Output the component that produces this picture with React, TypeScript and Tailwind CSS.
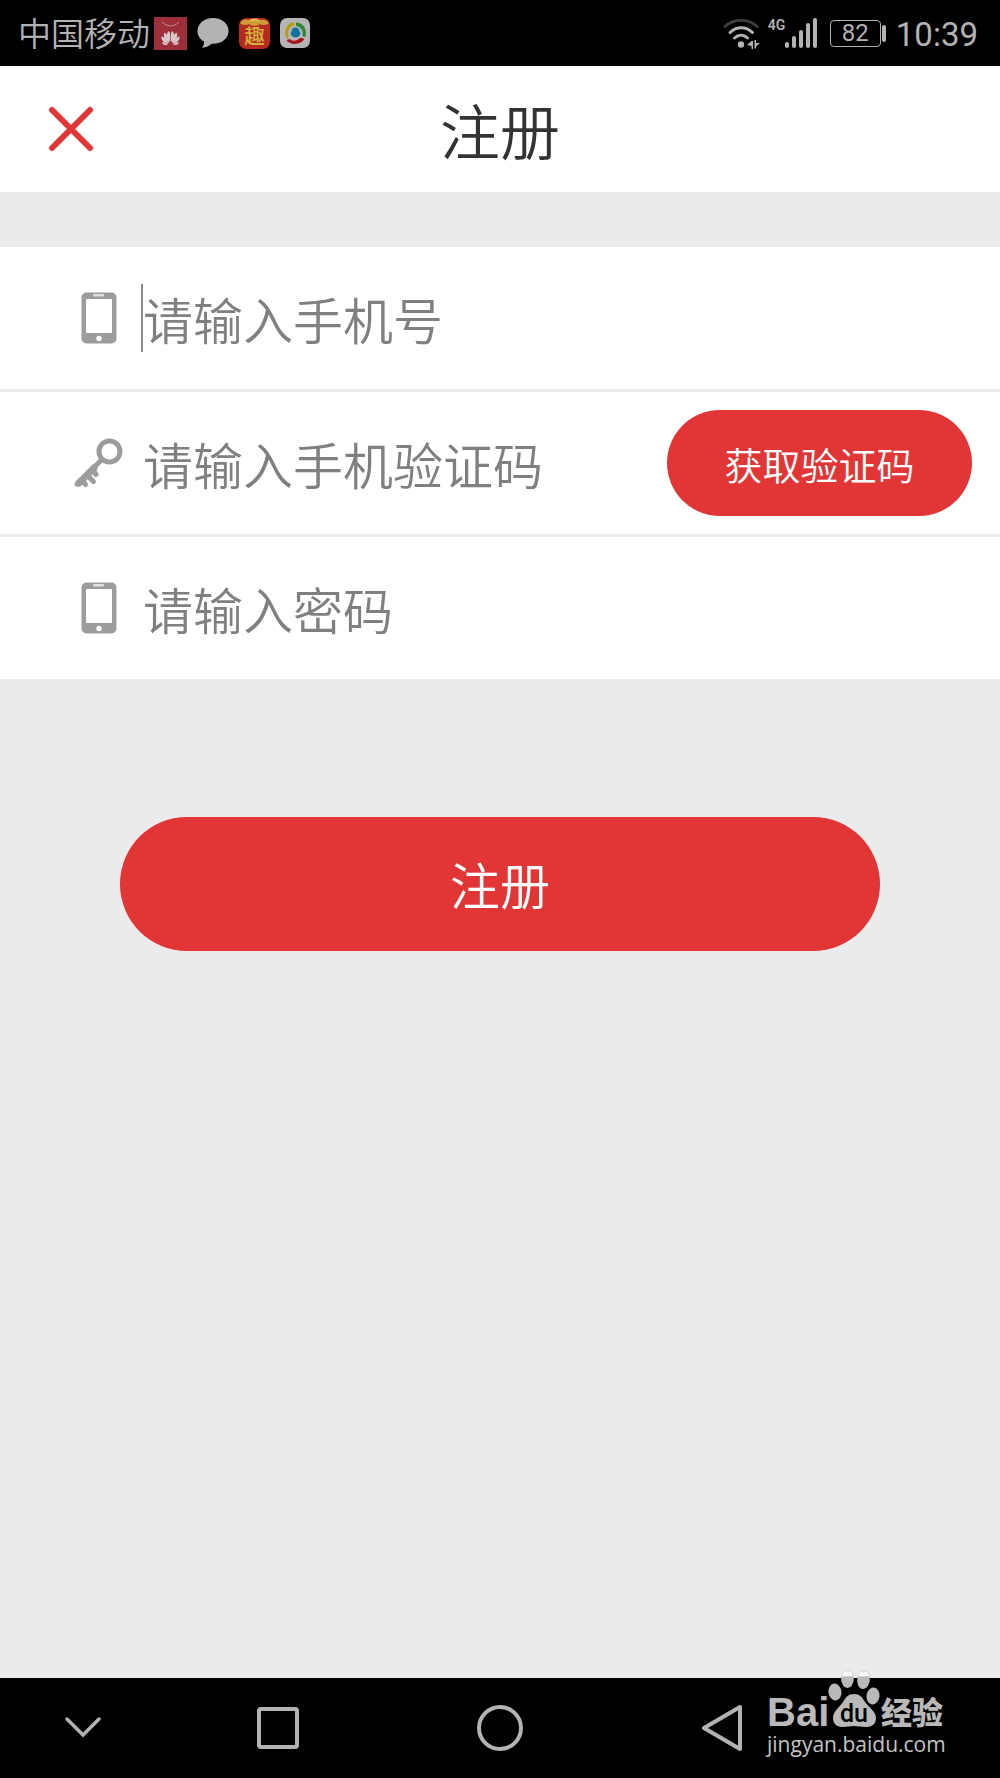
import type { ReactNode } from 'react';

const cjk = "font-['Roboto','Noto_Sans_CJK_SC',sans-serif]";

function HuaweiIcon() {
  const half = (
    <>
      <path d="M15.900 25C12 21 12 16 15 14C16.400 16 16.400 21 15.900 25Z" />
      <path d="M15.200 26C10 22.500 9 18.500 10.500 15.500C13 17 14.500 21 15.200 26Z" />
      <path d="M14.500 26.800C9 25.500 7 22.500 7.500 19.500C10.500 20 13 23 14.500 26.800Z" />
      <path d="M14 27.600C10.500 28.800 8.500 27.500 8.200 25C10 25 12.500 26 14 27.600Z" />
    </>
  );
  return (
    <svg viewBox="0 0 33 33" className="size-[33px]" aria-hidden="true">
      <rect width="33" height="33" fill="#9d2f3a" />
      <path d="M8 5C11 8 15 9 17 9C19 9 22 8 25 5" fill="none" stroke="#c78a90" strokeWidth="1" />
      <g fill="#dccaca">
        {half}
        <g transform="translate(33 0) scale(-1 1)">{half}</g>
      </g>
    </svg>
  );
}

function BubbleIcon() {
  return (
    <svg viewBox="0 0 32 30" className="h-[30px] w-8" aria-hidden="true">
      <path d="M16 0C7 0 0.500 5.800 0.500 13c0 4.500 2.500 8.200 6.500 10.600C7.300 26 6.500 28 5 30c4.500-.6 7.300-2 9.500-4.200C24.500 26.500 31.500 20.500 31.500 13 31.500 5.800 25 0 16 0Z" fill="#b3b3b3" />
    </svg>
  );
}

function QuIcon() {
  return (
    <svg viewBox="0 0 30 30" className="size-[31px] overflow-visible" aria-hidden="true">
      <rect width="30" height="30" rx="7" fill="#b62a20" />
      <path d="M1 5c2-4 6-4 9-3 2-2 8-2 10 0 4-1 7 0 9 3-2 2-6 2-9 1-3 2-7 2-10 0-3 1-7 1-9-1Z" fill="#cf9d33" />
      <path d="M11 3c2-2 6-2 8 0" stroke="#e2c16b" strokeWidth="1.500" fill="none" />
      <text x="15" y="25" fontSize="20" fontWeight="500" textAnchor="middle" fill="#d3b13a" fontFamily="Noto Sans CJK SC">趣</text>
    </svg>
  );
}

function RingIcon() {
  return (
    <svg viewBox="0 0 30 30" className="size-[30px]" aria-hidden="true">
      <rect width="30" height="30" rx="7" fill="#b5b5b5" />
      <path d="M14 4C7 5 3 12 6.500 20C7.500 21 9 20 8.800 18.500C7 13 9.500 8.500 14.500 7Z" fill="#b79b16" />
      <path d="M16 4.500C23 4.500 27.500 11 25.500 18.500C24 19.500 22.500 18.500 22.500 17C23.500 12.500 20.500 8.500 16 8Z" fill="#2b8a35" />
      <path d="M24.500 21C20.500 27 11 27.500 6.500 22.500C8.500 20.500 10.500 21.500 12 22.500C15.500 23.500 18.500 21.500 20.500 19.800Z" fill="#a3141c" />
      <path d="M15.500 9.500c2.700 0 4 1.800 4 4.200 1.300 1.500 1 3 .2 3.300-.7 1.600-2 2.300-4.200 2.300s-3.500-.7-4.200-2.300c-.8-.3-1.100-1.800.2-3.300 0-2.400 1.300-4.200 4-4.200Z" fill="#12719f" />
    </svg>
  );
}

function WifiIcon() {
  return (
    <svg viewBox="0 0 37 32" className="h-8 w-[37px]" aria-hidden="true">
      <g fill="none" strokeLinecap="round" strokeWidth="3">
        <path d="M2 9.500C11 1 25 1 34 9.500" stroke="#3c3c3c" />
        <path d="M7 15.500C13.500 9 23 9 29.500 15.500" stroke="#b3b3b3" />
        <path d="M11.500 21C15.500 17.300 20.500 17.300 24.500 21" stroke="#b3b3b3" />
      </g>
      <circle cx="18" cy="27.500" r="3.200" fill="#b3b3b3" />
      <path d="M24 28l4.500-4h1.500v8h-1.500v-3ZM31.500 23H33v3h4l-4 3.500v2h-1.500Z" fill="#b3b3b3" />
    </svg>
  );
}

function SignalIcon() {
  const tops = [25, 19, 13, 6, 1];
  return (
    <div className="relative h-8 w-[50px]">
      <span className="absolute top-0 left-0 font-['Roboto',sans-serif] text-sm leading-4 font-semibold">4G</span>
      <svg viewBox="0 0 50 32" className="h-8 w-[50px]" aria-hidden="true">
        {tops.map((t, i) => (
          <rect key={t} x={17 + i * 7} y={t} width="4" height={31 - t} rx="2" fill="#b3b3b3" />
        ))}
      </svg>
    </div>
  );
}

function Battery() {
  return (
    <div className="flex items-center gap-px">
      <div className="flex h-[27px] w-[51px] items-center justify-center rounded-[4px] border border-[#b3b3b3] text-2xl leading-6">82</div>
      <div className="h-[17px] w-1 rounded-[2px] bg-[#b3b3b3]" />
    </div>
  );
}

function PhoneIcon() {
  return (
    <svg viewBox="0 0 36 52" className="h-[52px] w-9" aria-hidden="true">
      <rect x="0.500" y="0.500" width="35" height="51" rx="5" fill="#9c9c9c" />
      <rect x="5" y="7" width="26" height="34" rx="1" fill="#fff" />
      <rect x="12" y="2" width="11" height="2.500" rx="1" fill="#e0e0e0" />
      <circle cx="18" cy="46.500" r="2.700" fill="#fff" />
    </svg>
  );
}

function KeyIcon() {
  return (
    <svg viewBox="0 0 50 50" className="size-[50px]" aria-hidden="true">
      <g fill="none" stroke="#9c9c9c" strokeLinecap="round">
        <circle cx="35.500" cy="13.500" r="10.500" strokeWidth="5" />
        <path d="M27 22.500L3 46" strokeWidth="5" />
        <path d="M20 30L5 45" strokeWidth="7" />
        <path d="M19 32l3 4.500M13.500 37.500l6 6M8.500 42.500l3 4" strokeWidth="5" />
      </g>
    </svg>
  );
}

interface FieldProps {
  id: string;
  label: string;
  type: string;
  icon: ReactNode;
  caret?: boolean;
  children?: ReactNode;
}

function Field({ id, label, type, icon, caret, children }: FieldProps) {
  return (
    <div className="flex h-[142px] items-center bg-white pr-7 pl-[73px]">
      <label htmlFor={id} aria-label={label} className="mr-4 flex w-[52px] shrink-0 justify-center">
        {icon}
      </label>
      <span className={caret ? 'h-[68px] w-[2px] shrink-0 bg-[#8a8a8a]' : 'h-[68px] w-[2px] shrink-0'} />
      <input
        id={id}
        type={type}
        placeholder={label}
        className="min-w-0 flex-1 bg-transparent pt-[10px] text-[50px] leading-[80px] font-[350] text-[#333] outline-none placeholder:text-[#808080]"
      />
      {children}
    </div>
  );
}

function Watermark() {
  return (
    <a href="#jingyan" className="absolute right-[53px] bottom-[22px] block w-[180px] text-[#c4c4c4]">
      <svg viewBox="0 0 180 60" className="h-[60px] w-full overflow-visible" aria-label="Baidu 经验">
        <g fill="#b9b9b9">
          <text x="0" y="54" fontSize="40" fontWeight="700" fontFamily="Liberation Sans">Bai</text>
          <text x="114" y="52" fontSize="31" fontWeight="900" fontFamily="Noto Sans CJK SC">经验</text>
          <ellipse cx="68" cy="20" rx="6.500" ry="8.500" transform="rotate(-8 68 20)" />
          <ellipse cx="80.500" cy="7" rx="6.300" ry="9" />
          <ellipse cx="96.500" cy="8" rx="6.300" ry="9" transform="rotate(8 96.500 8)" />
          <ellipse cx="106" cy="24" rx="6.500" ry="8.500" transform="rotate(8 106 24)" />
          <path d="M87 22c6 0 8 3 11 8 4 6 11 9 11 16 0 6-4 9-10 9-5 0-8-1-12-1s-7 1-12 1c-6 0-9-4-9-9 0-7 6-10 10-16 3-5 5-8 11-8Z" />
        </g>
        <path d="M74.500 4.500C76-3.500 85-3.500 86.500 4.500ZM90.500 4.500C92.500-3.500 102-2 103 4.500Z" fill="#f8f8f8" stroke="#d4d4d4" strokeWidth="1" />
        <text x="87" y="50" fontSize="25" fontWeight="500" textAnchor="middle" fill="#000" fontFamily="Roboto">du</text>
      </svg>
      <span className="block font-['Open_Sans',sans-serif] text-[21px] leading-6">jingyan.baidu.com</span>
    </a>
  );
}

export default function App() {
  return (
    <div className={`flex min-h-screen flex-col bg-[#ebebeb] ${cjk}`}>
      <div className="flex h-[66px] items-center justify-between bg-black pr-[22px] pl-[18px] text-[#b3b3b3]">
        <div className="flex items-center">
          <span className="mr-1 pt-1 text-[33px] leading-[48px] font-[350]">中国移动</span>
          <div className="flex items-center gap-[10px]">
            <HuaweiIcon />
            <BubbleIcon />
            <QuIcon />
            <RingIcon />
          </div>
        </div>
        <div className="flex items-center">
          <WifiIcon />
          <div className="ml-2">
            <SignalIcon />
          </div>
          <div className="ml-3">
            <Battery />
          </div>
          <span className="ml-[10px] pt-1 text-[33px] leading-[48px]">10:39</span>
        </div>
      </div>

      <header className="grid h-[126px] grid-cols-[1fr_auto_1fr] items-center bg-white px-12">
        <button type="button" aria-label="关闭" className="justify-self-start">
          <svg viewBox="0 0 46 46" className="size-[46px]" aria-hidden="true">
            <path d="M4 4L42 42M42 4L4 42" stroke="#e23636" strokeWidth="6" strokeLinecap="round" />
          </svg>
        </button>
        <h1 className="pt-3 text-[60px] leading-[80px] font-[350] text-[#333]">注册</h1>
      </header>

      <form className="mt-[55px] flex flex-col" onSubmit={(e) => e.preventDefault()}>
        <div className="flex flex-col gap-[3px]">
          <Field id="phone" label="请输入手机号" type="tel" icon={<PhoneIcon />} caret />
          <Field id="code" label="请输入手机验证码" type="text" icon={<KeyIcon />}>
            <button type="button" className="h-[106px] w-[305px] shrink-0 rounded-full bg-[#e23636] pt-2 text-[38px] font-[350] text-white">
              获取验证码
            </button>
          </Field>
          <Field id="password" label="请输入密码" type="password" icon={<PhoneIcon />} />
        </div>
        <button type="submit" className="mx-[12%] mt-[138px] h-[134px] rounded-full bg-[#e23636] pt-2 text-[50px] font-[350] text-white">
          注册
        </button>
      </form>

      <nav className="relative mt-auto grid h-[100px] grid-cols-[3fr_4fr_4fr_4fr_3fr] items-center justify-items-center bg-black">
        <button type="button" aria-label="收起">
          <svg viewBox="0 0 36 22" className="h-[22px] w-9" aria-hidden="true">
            <path d="M2 2L18 18L34 2" fill="none" stroke="#b3b3b3" strokeWidth="3.500" strokeLinecap="round" />
          </svg>
        </button>
        <button type="button" aria-label="最近任务" className="size-[42px] rounded-[4px] border-4 border-[#b3b3b3]" />
        <button type="button" aria-label="主页" className="size-[46px] rounded-full border-4 border-[#b3b3b3]" />
        <button type="button" aria-label="返回">
          <svg viewBox="0 0 40 46" className="h-[46px] w-10" aria-hidden="true">
            <path d="M38 2V44L2 23Z" fill="none" stroke="#b3b3b3" strokeWidth="4" strokeLinejoin="round" />
          </svg>
        </button>
        <Watermark />
      </nav>
    </div>
  );
}
